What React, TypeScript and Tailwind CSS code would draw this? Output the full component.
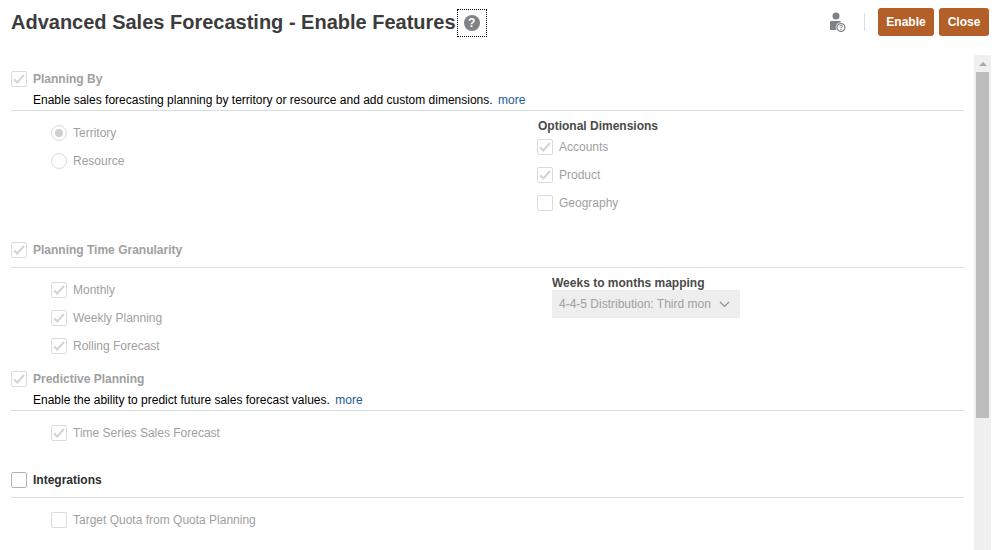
import React from 'react';

const Check = ({ on, dark }: { on?: boolean; dark?: boolean }) => (
  <span className={`flex w-4 h-4 shrink-0 items-center justify-center rounded-[2px] border bg-white ${dark ? 'border-[#a9b4be]' : 'border-[#d9dbdd]'}`}>
    {on && (
      <svg width="12" height="10" viewBox="0 0 12 10" fill="none">
        <path d="M1 5.2L4.2 8.5L11 1" stroke="#d4d4d4" strokeWidth="2" />
      </svg>
    )}
  </span>
);

const Radio = ({ on }: { on?: boolean }) => (
  <span className="flex w-4 h-4 shrink-0 items-center justify-center rounded-full border border-[#d9dbdd] bg-white">
    {on && <span className="w-2 h-2 rounded-full bg-[#cfcfcf]"></span>}
  </span>
);

const Option = ({ label, children }: { label: string; children: React.ReactNode }) => (
  <div className="flex h-7 items-center gap-1.5 text-xs text-[#a0a0a0]">
    {children}
    <span>{label}</span>
  </div>
);

const SectionHead = ({ title, on, active, desc }: { title: string; on?: boolean; active?: boolean; desc?: string }) => (
  <div className="border-b border-[#d6dfe6]">
    <div className={`flex h-4 items-center gap-1.5 text-xs font-bold ${active ? 'text-[#2f2f2f]' : 'text-[#a0a0a0]'}`}>
      <Check on={on} dark={active} />
      <span>{title}</span>
    </div>
    {desc ? (
      <div className="ml-[22px] mt-[5px] mb-[1px] h-[17px] text-xs leading-[17px] text-black">
        {desc}
        <span className="ml-[5.5px] text-[#1e5a96]">more</span>
      </div>
    ) : (
      <div className="h-[9px]"></div>
    )}
  </div>
);

export default function App() {
  return (
    <div className="flex h-[550px] w-[997px] flex-col overflow-hidden bg-white font-['Liberation_Sans',Arial,sans-serif]">
      {/* Header */}
      <div className="flex h-[55px] shrink-0 items-start justify-between pl-[11px] pr-[8px] pt-2">
        <div className="flex items-start">
          <h1 className="h-7 text-xl font-bold leading-7 text-[#3c3c3c]">Advanced Sales Forecasting - Enable Features</h1>
          <span className="ml-px mt-px flex h-[28px] w-[30px] items-center justify-center border border-dotted border-black">
            <span className="flex h-4 w-4 items-center justify-center rounded-full bg-[#808285] text-xs font-bold text-white">?</span>
          </span>
        </div>
        <div className="flex items-center">
          <svg width="18" height="20" viewBox="0 0 18 20" className="mr-[17px]">
            <circle cx="7" cy="4" r="3.5" fill="#7d8388" />
            <path d="M1 10a1 1 0 0 1 1-1h9a1 1 0 0 1 1 1v8H1z" fill="#7d8388" />
            <circle cx="12" cy="15.5" r="5.2" fill="#ffffff" />
            <circle cx="12" cy="15.5" r="3.9" fill="none" stroke="#7d8388" strokeWidth="1.3" />
            <text x="12" y="18" textAnchor="middle" fontSize="7" fontWeight="700" fill="#7d8388">?</text>
          </svg>
          <span className="mr-[13px] h-[18px] w-px bg-[#d6dfe6]"></span>
          <button className="h-7 w-14 rounded-[3px] bg-[#b35f27] text-xs font-bold text-white">Enable</button>
          <button className="ml-[5px] h-7 w-[50px] rounded-[3px] bg-[#b35f27] text-xs font-bold text-white">Close</button>
        </div>
      </div>

      <div className="flex min-h-0 flex-1 pr-[6px]">
        {/* Content */}
        <div className="w-[974px] pl-[11px] pr-[10px] pt-4">
          <SectionHead title="Planning By" on desc="Enable sales forecasting planning by territory or resource and add custom dimensions." />
          <div className="flex h-[131px]">
            <div className="ml-10 w-[487px] pt-2">
              <Option label="Territory"><Radio on /></Option>
              <Option label="Resource"><Radio /></Option>
            </div>
            <div className="pt-[8px]">
              <div className="h-[15px] text-xs font-bold leading-[15px] text-[#4a4a4a]">Optional Dimensions</div>
              <div className="-ml-px -mt-[1px]">
                <Option label="Accounts"><Check on /></Option>
                <Option label="Product"><Check on /></Option>
                <Option label="Geography"><Check /></Option>
              </div>
            </div>
          </div>

          <SectionHead title="Planning Time Granularity" on />
          <div className="flex h-[103px]">
            <div className="ml-10 w-[501px] pt-2">
              <Option label="Monthly"><Check on /></Option>
              <Option label="Weekly Planning"><Check on /></Option>
              <Option label="Rolling Forecast"><Check on /></Option>
            </div>
            <div className="pt-[8px]">
              <div className="h-[14px] text-xs font-bold leading-[15px] text-[#4a4a4a]">Weeks to months mapping</div>
              <div className="flex h-7 w-[188px] items-center justify-between bg-[#eeeeef] pl-[7px] pr-[10px] text-xs text-[#a0a0a0]">
                <span className="whitespace-nowrap">4-4-5 Distribution: Third mon</span>
                <svg width="11" height="7" viewBox="0 0 11 7" fill="none"><path d="M1 1l4.5 4.5L10 1" stroke="#8f8f8f" strokeWidth="1.2" /></svg>
              </div>
            </div>
          </div>

          <SectionHead title="Predictive Planning" on desc="Enable the ability to predict future sales forecast values." />
          <div className="h-[61px] pl-10 pt-2">
            <Option label="Time Series Sales Forecast"><Check on /></Option>
          </div>

          <SectionHead title="Integrations" active />
          <div className="pl-10 pt-2">
            <Option label="Target Quota from Quota Planning"><Check /></Option>
          </div>
        </div>

        {/* Scrollbar */}
        <div className="flex w-[17px] flex-col items-center bg-[#f0f0f0]">
          <div className="flex h-[17px] items-center justify-center">
            <span className="h-0 w-0 border-x-[4px] border-b-[4px] border-x-transparent border-b-[#a8a8a8]"></span>
          </div>
          <div className="h-[346px] w-[13px] bg-[#bdbdbd]"></div>
        </div>
      </div>
    </div>
  );
}
